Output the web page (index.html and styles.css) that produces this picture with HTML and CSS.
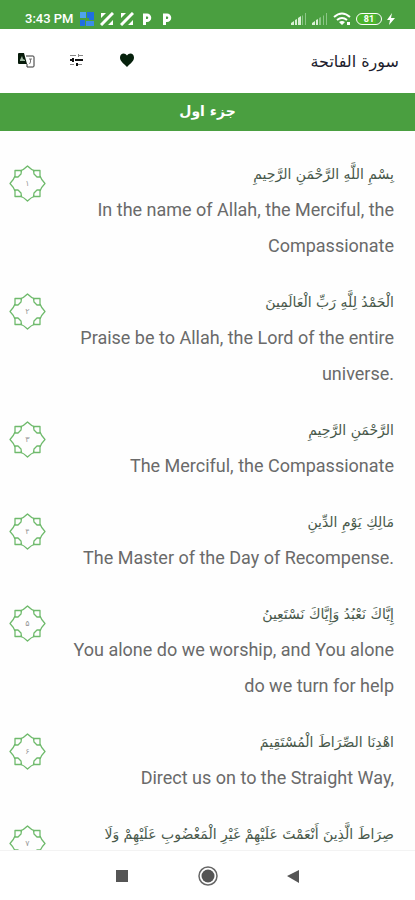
FILE: index.html
```html
<!DOCTYPE html>
<html lang="ar" dir="rtl">
<head>
    <meta charset="UTF-8">
    <meta name="viewport" content="width=device-width, initial-scale=1.0">
    <title>سورة الفاتحة</title>
    <link rel="stylesheet" href="styles.css">
</head>
<body>
    <div class="status-bar" dir="ltr">
        <div class="status-left">
            <span class="clock">3:43 PM</span>
            <svg width="14" height="14" viewBox="0 0 14 14"><path fill="#4fa3ee" d="M0 0h6v6H0z"/><path fill="#1f6fe0" d="M7 0h7v8H9V6H7zM0 8h5v6H0z"/><path fill="#3b8de8" d="M6 9h8v5H6z"/></svg>
            <svg width="14" height="14" viewBox="0 0 14 14"><path fill="#fff" d="M1 1h5L1 6zM13 13H8l5-5z"/><path stroke="#fff" stroke-width="3" d="M1 13 13 1"/></svg>
            <svg width="14" height="14" viewBox="0 0 14 14"><path fill="#fff" d="M1 1h5L1 6zM13 13H8l5-5z"/><path stroke="#fff" stroke-width="3" d="M1 13 13 1"/></svg>
            <svg class="p-icon" width="10" height="12" viewBox="0 0 10 12"><path fill="none" stroke="#fff" stroke-width="3" d="M2.500 12V2H5a2.500 2.500 0 0 1 0 5.500H3"/></svg>
            <svg class="p-icon" width="10" height="12" viewBox="0 0 10 12"><path fill="none" stroke="#fff" stroke-width="3" d="M2.500 12V2H5a2.500 2.500 0 0 1 0 5.500H3"/></svg>
        </div>
        <div class="status-right">
            <svg width="16" height="12" viewBox="0 0 16 12"><path fill="#d9f0d5" d="M0 12v-2l3-2v4zM4 12V7l2-1v6zM7 12V5l3-2v9z"/><path fill="#8cc687" d="M11 12V3l1-1v10zM14 12V0h1v12z"/></svg>
            <svg width="16" height="12" viewBox="0 0 16 12"><path fill="#d9f0d5" d="M0 12v-2l3-2v4zM4 12V7l2-1v6z"/><path fill="#8cc687" d="M7 12V5l2-1v8zM11 12V3l1-1v10zM14 12V0h1v12z"/></svg>
            <svg width="18" height="13" viewBox="0 0 18 13"><g fill="none" stroke="#fff" stroke-width="2"><path d="M1 5q8-7 16 0"/><path d="M4 8q5-4 10 0"/></g><path fill="#fff" d="M6 10q3-2 6 0l-3 3zM14 10h3v3h-3z"/></svg>
            <span class="battery">81</span>
            <svg width="8" height="12" viewBox="0 0 8 12"><path fill="#fff" d="M5 0 0 7h3l-1 5 6-7H4z"/></svg>
        </div>
    </div>

    <header class="toolbar">
        <h1>سورة الفاتحة</h1>
        <div class="actions">
            <button type="button" aria-label="المفضلة">
                <svg width="16" height="16" viewBox="0 0 16 16"><path fill="#06210c" d="M8 14C4 10 1 8 1 4.500C1 0 6 -1 8 2.500C10 -1 15 0 15 4.500C15 8 12 10 8 14z"/></svg>
            </button>
            <button type="button" aria-label="الإعدادات">
                <svg width="16" height="16" viewBox="0 0 16 16"><path stroke="#888" stroke-width="1" d="M1 2.500h6M9 2.500h5M9.500 1v3M1 11.500h4M7 11.500h6"/><path stroke="#111" stroke-width="2" d="M1 7h4M6 7h8M4 5v4M8 10v3"/></svg>
            </button>
            <button type="button" aria-label="الترجمة">
                <svg width="17" height="16" viewBox="0 0 17 16"><path fill="#071b0b" d="M1 0h5l3 11H1a1 1 0 0 1-1-1V1a1 1 0 0 1 1-1z"/><path fill="#9fb8a2" d="m2 7 2-4 1 3 2 1v1H2z"/><path fill="none" stroke="#333" d="M8 3h7a1 1 0 0 1 1 1v9a1 1 0 0 1-1 1H9v-3"/><path fill="none" stroke="#777" d="M11 6h3M12.500 6v3l-1 2"/></svg>
            </button>
        </div>
    </header>

    <h2 class="juz">جزء اول</h2>

    <!-- 星形の枠（節番号用） -->
    <svg class="sprite" aria-hidden="true">
        <symbol id="star" viewBox="0 0 37 37">
            <g fill="none" stroke="#6fba6c" stroke-width="1.300" stroke-linejoin="round">
                <path d="M11 6C14 5 16.500 3 18.500 1C20.500 3 23 5 26 6M31 11C32 14 34 16.500 36 18.500C34 20.500 32 23 31 26M26 31C23 32 20.500 34 18.500 36C16.500 34 14 32 11 31M6 26C5 23 3 20.500 1 18.500C3 16.500 5 14 6 11"/>
                <path d="M24.500 5.500h6.500v6.500h-3l-3-3zM12.500 5.500H6V12h3l3-3zM24.500 31.500H31V25h-3l-3 3zM12.500 31.500H6V25h3l3 3z"/>
            </g>
        </symbol>
    </svg>

    <main class="verses">
        <article class="verse">
            <div class="verse-text">
                <p class="arabic">بِسْمِ اللَّهِ الرَّحْمَنِ الرَّحِيمِ</p>
                <p class="translation" lang="en" dir="ltr">In the name of Allah, the Merciful, the Compassionate</p>
            </div>
            <div class="number"><svg><use href="#star"/></svg><span>۱</span></div>
        </article>
        <article class="verse">
            <div class="verse-text">
                <p class="arabic">الْحَمْدُ لِلَّهِ رَبِّ الْعَالَمِينَ</p>
                <p class="translation" lang="en" dir="ltr">Praise be to Allah, the Lord of the entire universe.</p>
            </div>
            <div class="number"><svg><use href="#star"/></svg><span>۲</span></div>
        </article>
        <article class="verse">
            <div class="verse-text">
                <p class="arabic">الرَّحْمَنِ الرَّحِيمِ</p>
                <p class="translation" lang="en" dir="ltr">The Merciful, the Compassionate</p>
            </div>
            <div class="number"><svg><use href="#star"/></svg><span>۳</span></div>
        </article>
        <article class="verse">
            <div class="verse-text">
                <p class="arabic">مَالِكِ يَوْمِ الدِّينِ</p>
                <p class="translation" lang="en" dir="ltr">The Master of the Day of Recompense.</p>
            </div>
            <div class="number"><svg><use href="#star"/></svg><span>۴</span></div>
        </article>
        <article class="verse">
            <div class="verse-text">
                <p class="arabic">إِيَّاكَ نَعْبُدُ وَإِيَّاكَ نَسْتَعِينُ</p>
                <p class="translation" lang="en" dir="ltr">You alone do we worship, and You alone do we turn for help</p>
            </div>
            <div class="number"><svg><use href="#star"/></svg><span>۵</span></div>
        </article>
        <article class="verse">
            <div class="verse-text">
                <p class="arabic">اهْدِنَا الصِّرَاطَ الْمُسْتَقِيمَ</p>
                <p class="translation" lang="en" dir="ltr">Direct us on to the Straight Way,</p>
            </div>
            <div class="number"><svg><use href="#star"/></svg><span>۶</span></div>
        </article>
        <article class="verse">
            <div class="verse-text">
                <p class="arabic">صِرَاطَ الَّذِينَ أَنْعَمْتَ عَلَيْهِمْ غَيْرِ الْمَغْضُوبِ عَلَيْهِمْ وَلَا</p>
            </div>
            <div class="number"><svg><use href="#star"/></svg><span>۷</span></div>
        </article>
    </main>

    <nav class="nav-bar" dir="ltr">
        <button type="button" aria-label="Recent apps"><svg width="20" height="20" viewBox="0 0 20 20"><path fill="#555" d="M4 4h12v12H4z"/></svg></button>
        <button type="button" aria-label="Home"><svg width="20" height="20" viewBox="0 0 20 20"><circle cx="10" cy="10" r="9" fill="none" stroke="#666" stroke-width="1.500"/><circle cx="10" cy="10" r="6.500" fill="#555"/></svg></button>
        <button type="button" aria-label="Back"><svg width="20" height="20" viewBox="0 0 20 20"><path fill="#555" d="M3 10 15 4v13z"/></svg></button>
    </nav>
</body>
</html>
```

FILE: styles.css
```css
* {
    box-sizing: border-box;
}
body {
    margin: 0;
    height: 100vh;
    display: flex;
    flex-direction: column;
    background-color: #fefefe;
    font-family: Roboto, "DejaVu Sans", sans-serif;
    color: #6a6a6a;
}
h1, h2, p {
    margin: 0;
}
button {
    display: flex;
    padding: 0;
    border: none;
    background: none;
    cursor: pointer;
}
.status-bar {
    display: flex;
    justify-content: space-between;
    align-items: center;
    height: 29px;
    padding: 8px 20px 0 25px;
    background-color: #4a9f40;
    color: white;
}
.status-left {
    display: flex;
    align-items: center;
    gap: 6px;
}
.status-right {
    display: flex;
    align-items: center;
    gap: 5px;
}
.clock {
    font-size: 13px;
    font-weight: 500;
}
.p-icon {
    margin: 0 2px;
}
.battery {
    width: 26px;
    height: 12px;
    border: 1px solid white;
    border-radius: 6px;
    background: linear-gradient(to right, #4bb52c 80%, #4a9f40 80%);
    font-size: 9px;
    font-weight: bold;
    line-height: 10px;
    text-align: center;
}
.toolbar {
    display: flex;
    justify-content: space-between;
    align-items: center;
    height: 64px;
    padding: 0 16px;
    background-color: white;
}
.toolbar h1 {
    color: #1c1c2c;
    font-family: "DejaVu Sans", sans-serif;
    font-size: 16px;
    font-weight: normal;
}
.actions {
    display: flex;
    gap: 34px;
    padding-left: 2px;
}
.juz {
    height: 38px;
    background-color: #4a9f40;
    color: white;
    font-family: "DejaVu Sans", sans-serif;
    font-size: 14px;
    line-height: 36px;
    text-align: center;
}
.sprite {
    display: none;
}
.verses {
    flex: 1;
    min-height: 0;
    overflow: hidden;
    padding: 25px 21px 0 9px;
}
.verse {
    display: flex;
    justify-content: space-between;
    gap: 20px;
    margin-bottom: 20px;
}
.verse-text {
    flex: 1;
    line-height: 36px;
}
.arabic {
    color: #48584a;
    font-family: "DejaVu Sans", sans-serif;
    font-size: 14px;
}
.translation {
    font-size: 18px;
    text-align: right;
}
.number {
    display: grid;
    place-items: center;
    width: 37px;
    height: 37px;
    margin-top: 9px;
    color: #999;
    font-family: "DejaVu Sans", sans-serif;
    font-size: 8px;
}
.number svg, .number span {
    grid-area: 1 / 1;
}
.number svg {
    width: 37px;
    height: 37px;
}
.nav-bar {
    display: flex;
    justify-content: center;
    align-items: center;
    gap: 66px;
    height: 50px;
    border-top: 1px solid #f3f3f3;
    background-color: white;
}
```
